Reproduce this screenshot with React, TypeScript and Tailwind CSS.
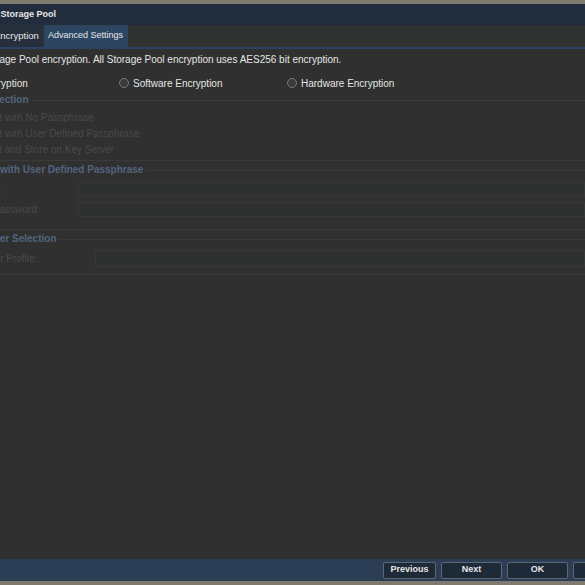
import React from "react";

const F = { fontFamily: '"Liberation Sans", Arial, sans-serif' };

function Radio() {
  return (
    <span className="inline-block w-[10px] h-[10px] rounded-full border border-[#7a7a7a] bg-[#3a3b3b] shrink-0" />
  );
}

function DimRadio() {
  return (
    <span className="inline-block w-[10px] h-[10px] rounded-full border border-[#444] bg-[#333] shrink-0" />
  );
}

function Legend({ text, offset }: { text: string; offset: string }) {
  return (
    <div className="flex items-center h-[12px]">
      <span className={`${offset} text-[10px] leading-[12px] font-bold text-[#536680] whitespace-nowrap pr-[3px]`}>
        {text}
      </span>
      <div className="flex-1 h-px bg-[#3a3b3b]" />
    </div>
  );
}

export default function App() {
  return (
    <div className="w-[585px] h-[585px] overflow-hidden flex flex-col bg-[#2f302f]" style={F}>
      <div className="h-[4px] bg-[#807a6e] shrink-0" />
      <div className="h-[21px] bg-[#212c3c] flex items-center shrink-0">
        <span className="-ml-[30px] text-[9px] font-bold text-[#e8e8e8] whitespace-nowrap">Create Storage Pool</span>
      </div>
      <div className="h-[22px] bg-[#303131] flex items-stretch shrink-0">
        <div className="bg-[#262f3b] -ml-[8px] pl-[2px] pr-[4px] flex items-center text-[9.5px] text-[#e6e6e6] whitespace-nowrap w-[51px]">
          Encryption
        </div>
        <div className="bg-[#2c4661] ml-[1px] px-[4px] w-[84px] flex items-center text-[9px] text-[#e6e6e6] whitespace-nowrap">
          Advanced Settings
        </div>
      </div>
      <div className="h-[2px] bg-[#2b4260] shrink-0" />

      <div className="flex-1 flex flex-col">
        <div className="mt-[5px] h-[12px] leading-[12px] text-[10px] text-[#e6e6e6] whitespace-nowrap -ml-[65px]">
          Configure Storage Pool encryption. All Storage Pool encryption uses AES256 bit encryption.
        </div>

        <div className="mt-[11px] h-[12px] flex items-center -ml-[49px] text-[10px] text-[#e6e6e6] whitespace-nowrap">
          <div className="w-[168px] flex items-center gap-[4px]"><Radio />No Encryption</div>
          <div className="w-[168px] flex items-center gap-[4px]"><Radio />Software Encryption</div>
          <div className="w-[168px] flex items-center gap-[4px]"><Radio />Hardware Encryption</div>
        </div>

        <div className="mt-[5px]">
          <Legend text="Key Selection" offset="-ml-[37px]" />
        </div>
        <div className="mt-[5px] flex flex-col gap-[4px] -ml-[46px] text-[10px] text-[#4a4a4a] whitespace-nowrap">
          <div className="h-[12px] flex items-center gap-[4px]"><DimRadio />Encrypt with No Passphrase</div>
          <div className="h-[12px] flex items-center gap-[4px]"><DimRadio />Encrypt with User Defined Passphrase</div>
          <div className="h-[12px] flex items-center gap-[4px]"><DimRadio />Encrypt and Store on Key Server</div>
        </div>
        <div className="mt-[5px] h-px bg-[#3a3b3b]" />

        <div className="mt-[3px]">
          <Legend text="Encrypt with User Defined Passphrase" offset="-ml-[40px]" />
        </div>
        <div className="mt-[6px] h-[15px] flex items-center -ml-[45px] text-[10px] text-[#4a4a4a] whitespace-nowrap">
          <div className="w-[123px]">Password:</div>
          <div className="flex-1 h-full border border-[#363737] bg-[#2f3030]" />
        </div>
        <div className="mt-[5px] h-[15px] flex items-center -ml-[45px] text-[10px] text-[#4a4a4a] whitespace-nowrap">
          <div className="w-[123px]">Confirm Password:</div>
          <div className="flex-1 h-full border border-[#363737] bg-[#2f3030]" />
        </div>
        <div className="mt-[12px] h-px bg-[#3a3b3b]" />

        <div className="mt-[3px]">
          <Legend text="Key Server Selection" offset="-ml-[43px]" />
        </div>
        <div className="mt-[5px] h-[17px] flex items-center -ml-[46px] text-[10px] text-[#4a4a4a] whitespace-nowrap">
          <div className="w-[141px]">Key Server Profile:</div>
          <div className="flex-1 h-full border border-[#363737] bg-[#2f3030]" />
        </div>
        <div className="mt-[7px] h-px bg-[#3a3b3b]" />
      </div>

      <div className="h-[22px] bg-[#2b3e56] flex items-center pl-[383px] shrink-0 gap-[5px] overflow-hidden">
        <button className="w-[53px] h-[17px] shrink-0 rounded-[2px] border border-[#5f6772] bg-[#1f2a38] text-[9px] font-bold text-[#e6e6e6]">Previous</button>
        <button className="w-[61px] h-[17px] shrink-0 rounded-[2px] border border-[#5f6772] bg-[#1f2a38] text-[9px] font-bold text-[#e6e6e6]">Next</button>
        <button className="w-[61px] h-[17px] shrink-0 rounded-[2px] border border-[#5f6772] bg-[#1f2a38] text-[9px] font-bold text-[#e6e6e6]">OK</button>
        <button className="w-[61px] h-[17px] shrink-0 rounded-[2px] border border-[#5f6772] bg-[#1f2a38] text-[9px] font-bold text-[#e6e6e6]">Cancel</button>
      </div>
      <div className="h-[4px] bg-[#807a6e] shrink-0" />
    </div>
  );
}
